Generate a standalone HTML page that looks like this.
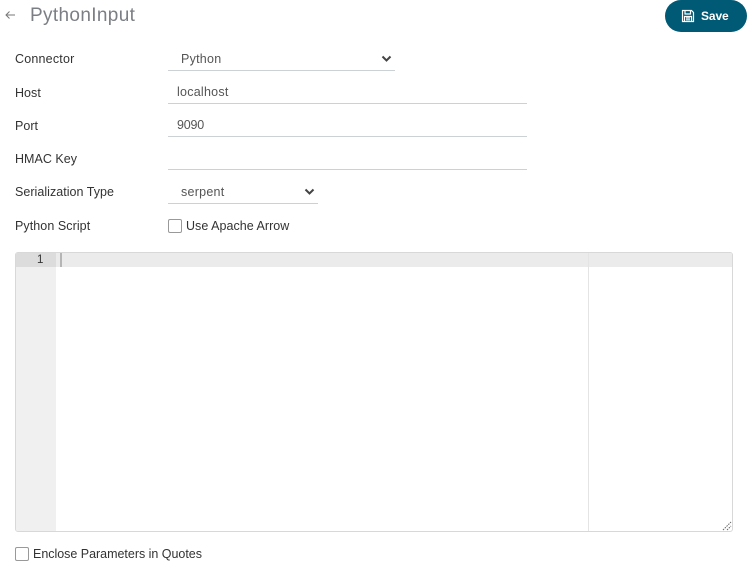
<!DOCTYPE html>
<html><head><meta charset="utf-8"><style>
html,body{margin:0;padding:0;background:#fff;width:751px;height:568px;overflow:hidden}
body{position:relative;font-family:"Liberation Sans",sans-serif;font-size:12.5px;color:#333}
.t{position:absolute;white-space:nowrap;line-height:16px;letter-spacing:.03px}
.v{color:#555;letter-spacing:.25px}
.l{position:absolute;height:1px;background:#ccd1d6}
.a{position:absolute}
.cb{position:absolute;width:12px;height:12px;border:1px solid #999;border-radius:2px;background:#fff}
</style></head><body>
<svg class="a" style="left:4px;top:9px" width="12" height="12" viewBox="0 0 12 12"><path d="M11 6H2M5.500 2.500L2 6l3.500 3.500" fill="none" stroke="#777" stroke-width="1"/></svg>
<div class="t" style="left:30px;top:5px;font-size:19px;line-height:22px;color:#7b7f85;letter-spacing:.35px">PythonInput</div>

<div class="a" style="left:665px;top:0;width:82px;height:32px;background:#005a75;border-radius:16px"></div>
<svg class="a" style="left:681px;top:9px" width="14" height="14" viewBox="0 0 14 14"><path d="M1.500 1.500H10.500L12.500 3.500V12.500H1.500Z M4 1.500V5H9.500V1.500 M3.500 12.500V7.500H10.500V12.500 M5 9H9 M5 10.800H9" fill="none" stroke="#fff" stroke-width="1.200"/></svg>
<div class="t" style="left:701px;top:8px;color:#fff;font-weight:bold;font-size:12px;letter-spacing:-.1px">Save</div>

<div class="t" style="left:15px;top:51px;letter-spacing:.2px">Connector</div>
<div class="t v" style="left:181px;top:51px">Python</div>
<svg class="a" style="left:381px;top:55px" width="11" height="8" viewBox="0 0 11 8"><path d="M1.500 1.500L5.500 5.500L9.500 1.500" fill="none" stroke="#444" stroke-width="2"/></svg>
<div class="l" style="left:168px;top:70px;width:227px"></div>

<div class="t" style="left:15px;top:85px">Host</div>
<div class="t v" style="left:177px;top:84px">localhost</div>
<div class="l" style="left:168px;top:103px;width:359px"></div>

<div class="t" style="left:15px;top:118px">Port</div>
<div class="t v" style="left:177px;top:117px;letter-spacing:-.2px">9090</div>
<div class="l" style="left:168px;top:136px;width:359px"></div>

<div class="t" style="left:15px;top:151px">HMAC Key</div>
<div class="l" style="left:168px;top:169px;width:359px"></div>

<div class="t" style="left:15px;top:184px">Serialization Type</div>
<div class="t v" style="left:181px;top:184px">serpent</div>
<svg class="a" style="left:304px;top:188px" width="11" height="8" viewBox="0 0 11 8"><path d="M1.500 1.500L5.500 5.500L9.500 1.500" fill="none" stroke="#444" stroke-width="2"/></svg>
<div class="l" style="left:168px;top:203px;width:150px"></div>

<div class="t" style="left:15px;top:218px;letter-spacing:.07px">Python Script</div>
<div class="cb" style="left:168px;top:219px"></div>
<div class="t" style="left:186px;top:218px">Use Apache Arrow</div>

<div class="a" style="left:15px;top:252px;width:716px;height:278px;border:1px solid #d8d8d8;border-radius:3px;overflow:hidden;background:#fff">
  <div class="a" style="left:0;top:0;width:40px;height:278px;background:#f0f0f0"></div>
  <div class="a" style="left:0;top:0;width:716px;height:14px;background:#ebebeb"></div>
  <div class="a" style="left:0;top:0;width:40px;height:14px;background:#dcdcdc"></div>
  <div class="t" style="left:21px;top:0;line-height:14px;font-size:11.500px;letter-spacing:0">1</div>
  <div class="a" style="left:44px;top:0;width:2px;height:14px;background:#b5b5b5"></div>
  <div class="a" style="left:572px;top:0;width:1px;height:278px;background:#e4e4e4"></div>
</div>
<svg class="a" style="left:722px;top:521px" width="10" height="10" viewBox="0 0 10 10"><path d="M1 9L9 1M5 9L9 5" fill="none" stroke="#666" stroke-width="1" stroke-dasharray="1.500 1"/></svg>

<div class="cb" style="left:15px;top:547px"></div>
<div class="t" style="left:33px;top:546px;letter-spacing:-.02px">Enclose Parameters in Quotes</div>
</body></html>
